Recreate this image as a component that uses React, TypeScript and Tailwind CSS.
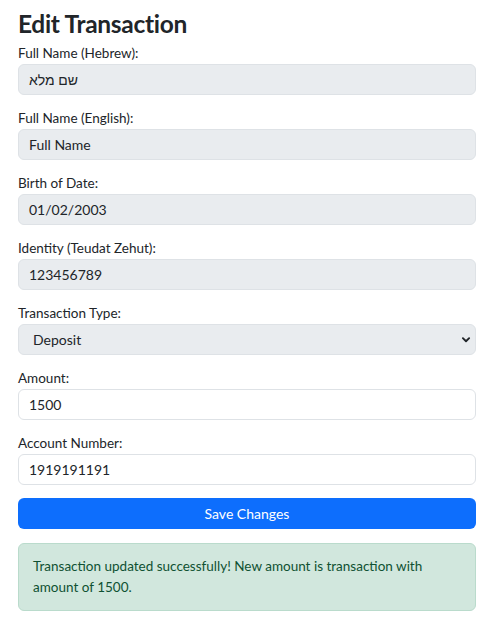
import React from "react";

const font = { fontFamily: 'Lato, "Noto Sans", "Liberation Sans", sans-serif' };

function Field({ label, value, disabled, select, dir }: { label: string; value: string; disabled?: boolean; select?: boolean; dir?: string }) {
  return (
    <div className="mb-[13px]">
      <div className="h-[21px] text-[13.5px] leading-[21px] text-[#212529]">{label}</div>
      <div
        className={
          "flex h-[31px] items-center justify-between rounded-[6px] border border-[#dee2e6] pl-[10px] pr-[3px] text-[14px] text-[#212529] " +
          (disabled ? "bg-[#e9ecef]" : "bg-white")
        }
      >
        <span dir={dir} className={select ? "pl-[4px]" : ""}>{value}</span>
        {select && (
          <svg width="12" height="10" viewBox="0 0 16 16" fill="none" stroke="#212529" strokeWidth="3" strokeLinecap="round" strokeLinejoin="round">
            <path d="m3 5 5 5 5-5" />
          </svg>
        )}
      </div>
    </div>
  );
}

export default function App() {
  return (
    <div className="min-h-[627px] bg-white pl-[18px] pt-[8px]" style={font}>
      <div className="w-[458px]">
        <h2 className="mb-[4px] text-[24.5px] font-bold leading-[31px] tracking-[-0.3px] text-[#212529]">Edit Transaction</h2>
        <Field label="Full Name (Hebrew):" value="שם מלא" disabled />
        <Field label="Full Name (English):" value="Full Name" disabled />
        <Field label="Birth of Date:" value="01/02/2003" disabled />
        <Field label="Identity (Teudat Zehut):" value="123456789" disabled />
        <Field label="Transaction Type:" value="Deposit" disabled select />
        <Field label="Amount:" value="1500" />
        <Field label="Account Number:" value="1919191191" />
        <button className="flex h-[31px] w-full items-center justify-center rounded-[6px] bg-[#0d6efd] text-[14px] text-white">
          Save Changes
        </button>
        <div className="mt-[14px] rounded-[6px] border border-[#badbcc] bg-[#d1e7dd] px-[14px] py-[12px] text-[13.5px] leading-[21px] text-[#0f5132]">
          Transaction updated successfully! New amount is transaction with amount of 1500.
        </div>
      </div>
    </div>
  );
}
